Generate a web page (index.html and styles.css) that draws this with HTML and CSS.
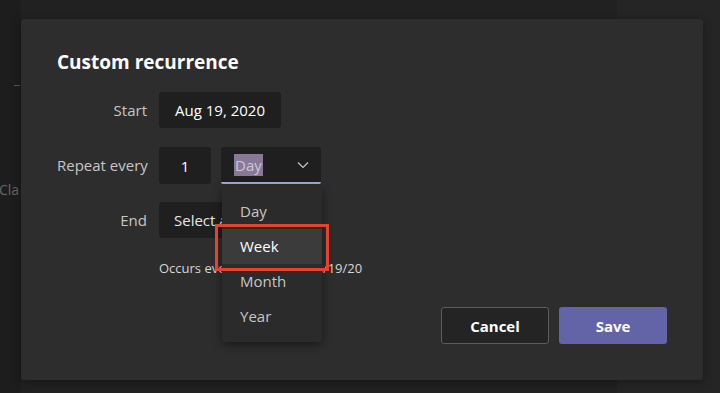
FILE: index.html
```html
<!DOCTYPE html>
<html lang="en">
<head>
    <meta charset="UTF-8">
    <meta name="viewport" content="width=device-width, initial-scale=1.0">
    <title>Custom recurrence</title>
    <link rel="stylesheet" href="styles.css">
</head>
<body>
    <div class="backdrop">
        <div class="side">
            <span class="side-dash"></span>
            <span class="side-text">Cla</span>
        </div>
        <div class="back-right"></div>
    </div>

    <div class="dialog">
        <h1>Custom recurrence</h1>
        <div class="form">
            <label>Start</label>
            <div class="row">
                <div class="field date">Aug 19, 2020</div>
            </div>

            <label>Repeat every</label>
            <div class="row">
                <div class="field count">1</div>
                <div class="field dropdown">
                    <span class="selected-text">Day</span>
                    <svg class="chevron" width="12" height="8" viewBox="0 0 12 8">
                        <path d="M1 1.5 L6 6.5 L11 1.5" fill="none" stroke="#c8c6c4" stroke-width="1.2"/>
                    </svg>
                    <ul class="menu">
                        <li>Day</li>
                        <li class="active">Week</li>
                        <li>Month</li>
                        <li>Year</li>
                    </ul>
                </div>
            </div>

            <label>End</label>
            <div class="row">
                <div class="field end">Select a date</div>
            </div>
        </div>
        <p class="note">Occurs every day starting 8/19/20</p>
        <div class="actions">
            <button class="btn cancel">Cancel</button>
            <button class="btn save">Save</button>
        </div>
    </div>
</body>
</html>
```

FILE: styles.css
```css
body {
    margin: 0;
    width: 720px;
    height: 393px;
    overflow: hidden;
    position: relative;
    background-color: #212121;
    font-family: 'Open Sans', 'Noto Sans', sans-serif;
    color: #fff;
}
.backdrop {
    display: flex;
    height: 100%;
}
.side {
    width: 21px;
    background-color: #1d1d1d;
    position: relative;
}
.side-dash {
    position: absolute;
    left: 14px;
    top: 85px;
    width: 6px;
    height: 1px;
    background-color: #555;
}
.side-text {
    position: absolute;
    left: -1px;
    top: 180px;
    font-size: 14px;
    color: #666;
}
.back-right {
    margin-left: auto;
    width: 103px;
    background-color: #252525;
}
.dialog {
    position: absolute;
    left: 21px;
    top: 19px;
    width: 682px;
    height: 361px;
    box-sizing: border-box;
    padding: 30px 36px;
    background-color: #2d2d2d;
    border-radius: 3px;
    box-shadow: 0 2px 10px rgba(0, 0, 0, 0.35);
}
h1 {
    margin: 0 0 17px;
    font-size: 19px;
    line-height: 26px;
    font-weight: 700;
    color: #fff;
}
.form {
    display: grid;
    grid-template-columns: 90px auto;
    grid-auto-rows: 36px;
    column-gap: 12px;
    row-gap: 19px;
}
label {
    text-align: right;
    align-self: center;
    font-size: 15px;
    white-space: nowrap;
    color: #c8c6c4;
}
.row {
    display: flex;
    gap: 10px;
}
.field {
    background-color: #1f1f1f;
    border-radius: 3px;
    display: flex;
    align-items: center;
    font-size: 15px;
    color: #fff;
    box-sizing: border-box;
}
.date {
    width: 122px;
    justify-content: center;
}
.count {
    width: 52px;
    justify-content: center;
    height: 37px;
}
.dropdown {
    width: 100px;
    height: 37px;
    padding: 0 12px 0 13px;
    position: relative;
    border-bottom: 2px solid #a6a7dc;
    border-radius: 3px 3px 2px 2px;
    justify-content: space-between;
}
.selected-text {
    background-color: #8a7897;
    color: #cfc6d6;
    padding: 0 1px;
    line-height: 22px;
    font-size: 15px;
}
.chevron {
    margin-top: 1px;
}
.end {
    width: 122px;
    padding-left: 15px;
    white-space: nowrap;
    overflow: hidden;
    color: #e6e6e6;
}
.menu {
    position: absolute;
    left: 1px;
    top: 39px;
    width: 100px;
    margin: 0;
    padding: 8px 0;
    list-style: none;
    background-color: #2b2b2b;
    border-radius: 3px;
    box-shadow: 0 3px 10px rgba(0, 0, 0, 0.45);
    z-index: 2;
}
.menu li {
    height: 35px;
    line-height: 35px;
    padding-left: 18px;
    font-size: 15px;
    color: #c8c6c4;
    position: relative;
}
.menu li.active {
    background-color: #3b3b3b;
    color: #fff;
}
.menu li.active::after {
    content: "";
    position: absolute;
    left: -7px;
    right: -7px;
    top: -5px;
    bottom: -7px;
    border: 3px solid #e8412c;
}
.note {
    margin: 21px 0 0 102px;
    font-size: 13px;
    line-height: 18px;
    color: #d6d6d6;
}
.actions {
    display: flex;
    justify-content: flex-end;
    gap: 10px;
    margin-top: 30px;
}
.btn {
    width: 108px;
    height: 37px;
    border-radius: 3px;
    font-family: inherit;
    font-size: 15px;
    font-weight: 700;
    cursor: pointer;
}
.cancel {
    background-color: #242424;
    border: 1px solid #5c5c5c;
    color: #fff;
}
.save {
    background-color: #6264a7;
    border: none;
    color: #fff;
}
```
